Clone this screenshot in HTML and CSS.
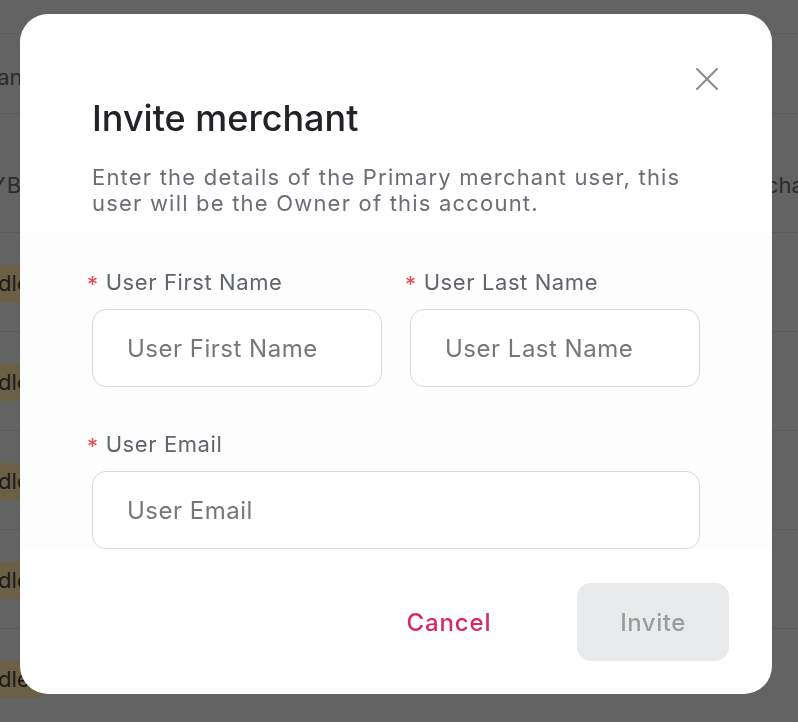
FILE: index.html
```html
<!DOCTYPE html>
<html lang="en">
<head>
<meta charset="utf-8">
<title>Invite merchant</title>
<link rel="stylesheet" href="styles.css">
</head>
<body>
<div class="backdrop">
  <div class="page">
    <div class="row row-top"><span class="top-text">Merchant</span></div>
    <div class="row row-head">
      <span class="head-left">MYBANK ID</span>
      <span class="head-right">Merchant</span>
    </div>
    <div class="row row-body"><span class="tag">Idle</span></div>
    <div class="row row-body"><span class="tag">Idle</span></div>
    <div class="row row-body"><span class="tag">Idle</span></div>
    <div class="row row-body"><span class="tag">Idle</span></div>
    <div class="row row-body"><span class="tag">Idle</span></div>
  </div>
</div>

<div class="modal" role="dialog" aria-labelledby="modal-title">
  <button class="close" type="button" aria-label="Close">
    <svg width="22" height="22" viewBox="0 0 22 22" aria-hidden="true">
      <path d="M1 1 L21 21 M21 1 L1 21" stroke="#8c8c8c" stroke-width="2" stroke-linecap="round" fill="none"/>
    </svg>
  </button>
  <div class="modal-header">
    <h1 id="modal-title" class="title">Invite merchant</h1>
    <p class="desc">Enter the details of the Primary merchant user, this user will be the Owner of this account.</p>
  </div>
  <div class="modal-body">
    <div class="grid">
      <div class="field">
        <label class="label"><span class="req">*</span>User First Name</label>
        <input class="input" type="text" placeholder="User First Name">
      </div>
      <div class="field">
        <label class="label"><span class="req">*</span>User Last Name</label>
        <input class="input" type="text" placeholder="User Last Name">
      </div>
      <div class="field wide">
        <label class="label"><span class="req">*</span>User Email</label>
        <input class="input" type="email" placeholder="User Email">
      </div>
    </div>
  </div>
  <div class="modal-footer">
    <button class="btn btn-cancel" type="button">Cancel</button>
    <button class="btn btn-invite" type="button" disabled>Invite</button>
  </div>
</div>
</body>
</html>
```

FILE: styles.css
```css
* { box-sizing: border-box; }

html, body {
  margin: 0;
  padding: 0;
  height: 100%;
}

body {
  font-family: Inter, "Noto Sans", "Liberation Sans", sans-serif;
  background: #636363;
  overflow: hidden;
}

.backdrop {
  background: #636363;
  height: 722px;
  overflow: hidden;
}

.page {
  padding-top: 33px;
}

.row {
  border-top: 1px solid #5a5a5a;
  display: flex;
  align-items: center;
  color: #222;
  font-size: 22px;
}

.row-top {
  height: 80px;
}

.top-text {
  margin-left: -69px;
  color: #2b2b2b;
  margin-top: 6px;
}

.row-head {
  height: 119px;
  justify-content: space-between;
  align-items: flex-end;
  padding-bottom: 34px;
}

.head-left {
  margin-left: -30px;
  color: #2b2b2b;
  letter-spacing: 1px;
}

.head-right {
  margin-right: -26px;
  color: #2b2b2b;
}

.row-body {
  height: 99px;
}

.tag {
  margin-left: -32px;
  background: #6b5f45;
  color: #1b1b1b;
  border-radius: 10px;
  padding: 5px 16px 5px 24px;
  line-height: 27px;
  margin-top: 3px;
}

.modal {
  position: fixed;
  left: 20px;
  top: 14px;
  width: 752px;
  height: 680px;
  background: #fff;
  border-radius: 28px;
  overflow: hidden;
  display: flex;
  flex-direction: column;
}

.close {
  position: absolute;
  top: 54px;
  right: 54px;
  width: 22px;
  height: 22px;
  padding: 0;
  border: 0;
  background: none;
  cursor: pointer;
  display: flex;
}

.modal-header {
  padding: 84px 72px 16px;
}

.title {
  margin: 0;
  font-size: 36px;
  line-height: 40px;
  font-weight: 500;
  color: #222326;
}

.desc {
  margin: 26px 0 0;
  font-size: 22px;
  line-height: 26px;
  letter-spacing: 1.2px;
  color: #6a6d74;
  font-weight: 400;
}

.modal-body {
  background: #fdfdfd;
  padding: 37px 72px 1px;
}

.grid {
  display: grid;
  grid-template-columns: 1fr 1fr;
  column-gap: 28px;
  row-gap: 44px;
}

.wide {
  grid-column: 1 / -1;
}

.field {
  display: flex;
  flex-direction: column;
  gap: 14px;
}

.label {
  font-size: 22px;
  line-height: 26px;
  letter-spacing: 0.6px;
  color: #60646b;
  margin-left: -5px;
  display: flex;
  align-items: center;
}

.req {
  color: #e5484d;
  font-size: 22px;
  margin-right: 7px;
  position: relative;
  top: 2px;
}

.input {
  height: 78px;
  border: 1px solid #d9d9d9;
  border-radius: 14px;
  padding: 0 34px;
  font-family: inherit;
  font-size: 24px;
  letter-spacing: 0.5px;
  color: #333;
  background: #fff;
  outline: none;
  width: 100%;
}

.input::placeholder {
  color: #76777a;
}

.modal-footer {
  margin-top: auto;
  display: flex;
  justify-content: flex-end;
  align-items: center;
  gap: 52px;
  padding: 0 43px 33px;
}

.btn {
  height: 78px;
  width: 152px;
  border: 0;
  border-radius: 14px;
  font-family: inherit;
  font-size: 24px;
  font-weight: 500;
  cursor: pointer;
}

.btn-cancel {
  background: none;
  color: #d9276c;
  letter-spacing: 0.9px;
}

.btn-invite {
  background: #e9eaec;
  color: #9b9b9b;
  letter-spacing: 0.5px;
}
```
